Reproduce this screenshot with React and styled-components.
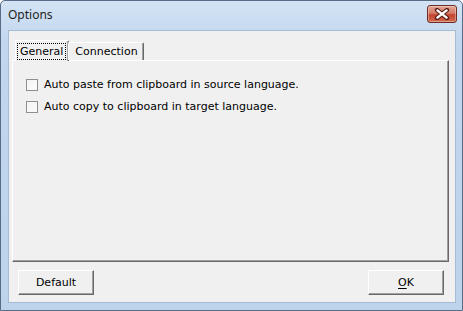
import React, { useState } from 'react';
import styled, { createGlobalStyle, css } from 'styled-components';

const GlobalStyle = createGlobalStyle`
  html, body {
    margin: 0;
    padding: 0;
    width: 463px;
    height: 311px;
    overflow: hidden;
    background: #fff;
  }
`;

const Window = styled.div`
  box-sizing: border-box;
  width: 463px;
  height: 311px;
  display: flex;
  flex-direction: column;
  border: 1px solid #576c86;
  border-radius: 5px 5px 0 0;
  background: linear-gradient(#d3e3f5, #c2d7ee 40px, #bcd3ec);
`;

const TitleBar = styled.div`
  height: 29px;
  display: flex;
  align-items: flex-start;
  justify-content: space-between;
  padding: 0 5px 0 7px;
`;

const Title = styled.div`
  font-family: 'Noto Sans', 'Open Sans', sans-serif;
  font-size: 12px;
  color: #1e1e1e;
  margin-top: 5px;
`;

const CloseButton = styled.div`
  box-sizing: border-box;
  width: 30px;
  height: 18px;
  margin-top: 4px;
  border: 1px solid #6e2c22;
  border-radius: 3px;
  background: linear-gradient(#e3a695, #d47b66 45%, #c2452f 55%, #cf6a4d);
  box-shadow: inset 0 0 0 1px rgba(255, 255, 255, 0.35);
  display: flex;
  align-items: center;
  justify-content: center;
`;

const Client = styled.div`
  flex: 1;
  margin: 0 6px 7px 7px;
  border: 1px solid #a6bbd4;
  background: #f0f0f0;
  display: flex;
  flex-direction: column;
  padding: 9px 6px 7px 3px;
  font-family: 'DejaVu Sans', Verdana, sans-serif;
  font-size: 11px;
  color: #000;
`;

const TabStrip = styled.div`
  display: flex;
  align-items: flex-end;
  padding-left: 5px;
  height: 20px;
  position: relative;
  z-index: 1;
`;

const Tab = styled.div`
  box-sizing: border-box;
  background: #f0f0f0;
  border-top: 1px solid #fff;
  border-left: 1px solid #fff;
  border-right: 1px solid #696969;
  box-shadow: inset -1px 0 0 #a0a0a0;
  border-radius: 2px 2px 0 0;
  display: flex;
  align-items: center;
  ${p => p.$active ? css`
    height: 21px;
    margin: 0 -1px -1px -2px;
    padding: 0 3px 0 2px;
  ` : css`
    height: 18px;
    padding: 0 3px 0 4px;
  `}
`;

const FocusLabel = styled.span`
  outline: ${p => (p.$focused ? '1px dotted #000' : 'none')};
  padding: 1px 2px;
  line-height: 13px;
`;

const Panel = styled.div`
  flex: 1;
  border-top: 1px solid #fff;
  border-left: 1px solid #fff;
  border-right: 1px solid #696969;
  border-bottom: 1px solid #696969;
  box-shadow: inset -1px -1px 0 #a0a0a0;
  padding: 17px 13px;
  display: flex;
  flex-direction: column;
  gap: 9px;
`;

const CheckRow = styled.label`
  display: flex;
  align-items: center;
  gap: 6px;
  height: 13px;
`;

const Box = styled.span`
  box-sizing: border-box;
  width: 12px;
  height: 12px;
  border: 1px solid #8e8f8f;
  background: linear-gradient(135deg, #f2f2f2, #fdfdfd);
  box-shadow: inset 0 0 0 1px #f6f6f6;
`;

const ButtonRow = styled.div`
  display: flex;
  justify-content: space-between;
  padding: 8px 5px 0 6px;
`;

const Button = styled.div`
  box-sizing: border-box;
  width: 76px;
  height: 25px;
  background: #f0f0f0;
  border-top: 1px solid #fff;
  border-left: 1px solid #fff;
  border-right: 1px solid #696969;
  border-bottom: 1px solid #696969;
  box-shadow: inset -1px -1px 0 #a0a0a0;
  display: flex;
  align-items: center;
  justify-content: center;
  padding-bottom: 1px;

  u {
    text-decoration-thickness: 1px;
    text-underline-offset: 2px;
  }
`;

const CloseGlyph = () => (
  <svg width="16" height="12" viewBox="0 0 16 12">
    <path d="M3 2 L13 10 M13 2 L3 10" stroke="#5a1e15" strokeWidth="4.4" strokeLinecap="round" />
    <path d="M3.4 2.4 L12.6 9.6 M12.6 2.4 L3.4 9.6" stroke="#fff" strokeWidth="2.4" strokeLinecap="round" />
  </svg>
);

const options = [
  'Auto paste from clipboard in source language.',
  'Auto copy to clipboard in target language.',
];

export default function App() {
  const [tab] = useState('General');

  return (
    <>
      <GlobalStyle />
      <Window>
        <TitleBar>
          <Title>Options</Title>
          <CloseButton>
            <CloseGlyph />
          </CloseButton>
        </TitleBar>
        <Client>
          <TabStrip>
            {['General', 'Connection'].map(name => (
              <Tab key={name} $active={name === tab}>
                <FocusLabel $focused={name === tab}>{name}</FocusLabel>
              </Tab>
            ))}
          </TabStrip>
          <Panel>
            {options.map(text => (
              <CheckRow key={text}>
                <Box />
                {text}
              </CheckRow>
            ))}
          </Panel>
          <ButtonRow>
            <Button>Default</Button>
            <Button><span><u>O</u>K</span></Button>
          </ButtonRow>
        </Client>
      </Window>
    </>
  );
}
